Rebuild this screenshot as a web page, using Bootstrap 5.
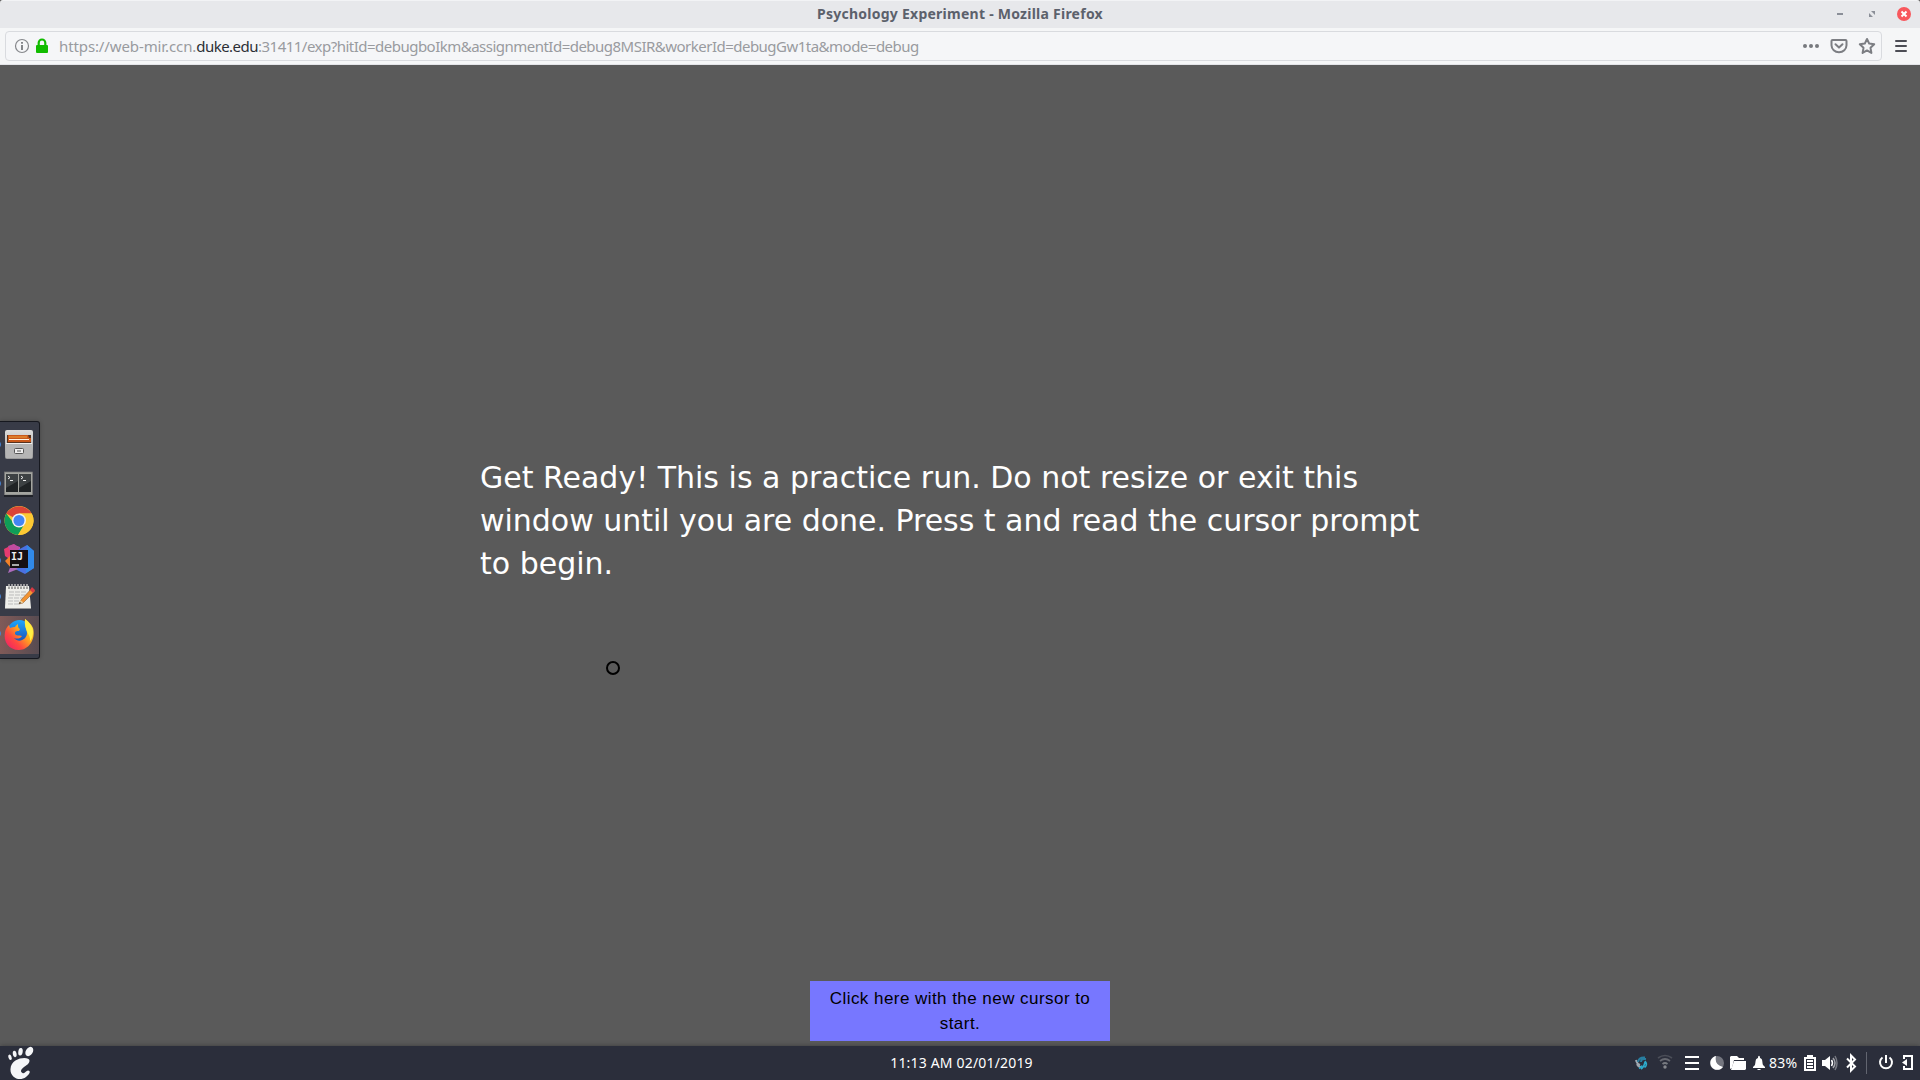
<!DOCTYPE html>
<html lang="en">
<head>
<meta charset="utf-8">
<title>Psychology Experiment</title>
<link href="https://cdn.jsdelivr.net/npm/bootstrap@5.3.0/dist/css/bootstrap.min.css" rel="stylesheet">
<style>
body{height:1080px;overflow:hidden;background:#5a5a5a;font-family:"Noto Sans","Open Sans",sans-serif}
svg{display:block;flex:none}
.titlebar{height:28px;background:#e7e8eb;border-top:1px solid #f2f3f5;color:#5c616c;border-radius:3px 3px 0 0}
.titletext{font-size:14px;font-weight:700;line-height:25px;letter-spacing:.25px}
.winbuttons{right:0;top:0}
.toolbar{height:37px;background:#f5f6f7;padding:3px 0 4px 5px;border-bottom:1px solid #e3e4e8}
.urlbar{width:1877px;height:30px;border:1px solid #d9dbdf;border-radius:4px;background:#f5f6f8}
.url{font-size:15px;line-height:28px;color:#999b9f;white-space:nowrap;padding-left:1px;letter-spacing:-.515px}
.url-host{letter-spacing:-.11px}
.url b{font-weight:400;color:#2c2f35}
.page-area{height:981px;background:#5a5a5a}
.instructions{width:960px;margin:0 auto;padding-top:391px;font:30px/43px "DejaVu Sans",sans-serif;color:#fff;white-space:nowrap}
.line-two{letter-spacing:-.02px}
.ring{left:606px;top:661px;width:14px;height:14px;border:2px solid #000;border-radius:50%}
.startbtn{width:300px;height:60px;margin:0 auto 5px;background:#77f;color:#000;font:17px/25px "Liberation Sans",sans-serif;letter-spacing:.45px;padding:5px 15px;white-space:nowrap;border:0;border-radius:0}
.dock{left:0;top:421px;width:40px;height:238px;background:#383b47;border:1px solid #16181f;border-left:0;border-radius:0 3px 3px 0;padding-top:4px;box-shadow:0 0 4px rgba(0,0,0,.25)}
.active-app{background:linear-gradient(90deg,#805a58,#574b51)}
.taskbar{height:34px;background:#2b2e3b;color:#fff;box-shadow:0 0 5px rgba(0,0,0,.35)}
.clock{font-size:14px;line-height:34px;white-space:nowrap;padding-left:3px;letter-spacing:.18px}
.battery-pct{width:35px;font-size:14px;line-height:34px;white-space:nowrap;letter-spacing:.3px}
.tray{right:0;top:0}
</style>
<script src="https://cdn.jsdelivr.net/npm/bootstrap@5.3.0/dist/js/bootstrap.bundle.min.js"></script>
</head>
<body class="d-flex flex-column">
<header class="titlebar position-relative d-flex justify-content-center">
  <span class="titletext">Psychology Experiment - Mozilla Firefox</span>
  <svg class="winbuttons position-absolute" width="90" height="27" viewBox="0 0 90 27"><path d="M7 13h6" stroke="#8b8f98" stroke-width="2"/><path d="M41 10h4v4zM39 12v4h4z" fill="#8b8f98"/><circle cx="74" cy="13" r="7" fill="#f8585d"/><path d="M71.500 10.500l5 5m0-5l-5 5" stroke="#fff" stroke-width="2"/></svg>
</header>
<nav class="toolbar d-flex">
  <div class="urlbar d-flex align-items-center">
    <svg width="44" height="28" viewBox="0 0 44 28"><circle cx="16" cy="14" r="6.500" fill="none" stroke="#85878b" stroke-width="1.200"/><path d="M16 13v5M16 10v1.800" stroke="#77797d" stroke-width="1.800"/><rect x="30" y="13" width="12" height="8" rx="1" fill="#12bc00"/><path d="M32.700 14v-3.200a3.300 3.300 0 0 1 6.600 0V14" fill="none" stroke="#12bc00" stroke-width="2.200"/></svg>
    <span class="url me-auto ms-2"><span class="url-host">https://web-mir.ccn.</span><b>duke.edu</b>:31411/exp?hitId=debugboIkm&amp;assignmentId=debug8MSIR&amp;workerId=debugGw1ta&amp;mode=debug</span>
    <svg width="81" height="28" viewBox="1 0 81 28"><g fill="#77797e"><circle cx="6" cy="14" r="2"/><circle cx="12" cy="14" r="2"/><circle cx="18" cy="14" r="2"/></g><g fill="none" stroke="#7c7e83" stroke-width="2" stroke-linejoin="round" stroke-linecap="round"><path d="M33.500 8h13q1 0 1 1v4.300a7.500 7 0 0 1-15 0V9q0-1 1-1z"/><path d="M36.500 12.300l3.500 3.300 3.500-3.300"/><path d="M68 7l2.200 4.600 5 .7-3.700 3.500.9 5.100-4.400-2.500-4.400 2.500.9-5.100-3.700-3.500 5-.7z"/></g></svg>
  </div>
  <svg width="38" height="30" viewBox="0 0 38 30"><path d="M14 10h10M14 15h10M14 20h10" stroke="#4c4d55" stroke-width="2" stroke-linecap="round"/></svg>
</nav>
<main class="page-area d-flex flex-column justify-content-between">
  <div class="instructions"><div>Get Ready! This is a practice run. Do not resize or exit this</div><div class="line-two">window until you are done. Press t and read the cursor prompt</div><div>to begin.</div></div>
  <button class="startbtn text-center" type="button">Click here with the new cursor to<br>start.</button>
</main>
<div class="ring position-absolute"></div>
<aside class="dock position-absolute d-flex flex-column">
  <svg width="39" height="39" viewBox="0 0 39 39"><defs><linearGradient id="metal" x2="0" y2="1"><stop stop-color="#ddd"/><stop offset="1" stop-color="#999"/></linearGradient></defs><path d="M0 16a2 3 0 0 1 0 5z" fill="#4685d8"/><rect x="5" y="4" width="28" height="29" rx="2" fill="url(#metal)"/><path d="M7 9h24v8H7z" fill="#553321"/><path d="M8 9h20l1 3h2v4H8z" fill="#c9581a"/><path d="M9 11h18" stroke="#eea03e"/><path d="M9 13.500h20" stroke="#fff3e3"/><path d="M6 17h26v15H6z" fill="#b5b5b5"/><path d="M6 17.500h26" stroke="#eee"/><rect x="14.500" y="22.500" width="9" height="5" rx="1" fill="#eee" stroke="#555"/><path d="M17 25h4" stroke="#555"/></svg>
  <svg width="39" height="41" viewBox="0 -1 39 41"><path d="M0 15a2 3 0 0 1 0 5z" fill="#4685d8"/><rect x="4.500" y="6" width="28" height="23" fill="#a4a5a0" stroke="#777" stroke-width=".7"/><path d="M4 30h29" stroke="#202228" stroke-width="2"/><path d="M6 8h12v18H6zM19 8h12v18H19z" fill="#202325"/><path d="M6 8h12v7L6 22zM19 8h12v7l-12 7z" fill="#3d4143"/><path d="M8 10l2 1.500-2 1.500M10 14.500h3M21 10l2 1.500-2 1.500M23 14.500h3" stroke="#eee" fill="none"/></svg>
  <svg width="39" height="38" viewBox="0 0 39 38"><path d="M0 13a2 3 0 0 1 0 5z" fill="#4685d8"/><circle cx="19" cy="14.500" r="14.500" fill="#fcc934"/><path d="M19 14.500L6.300 7.500A14.700 14.700 0 0 1 31.600 7.500H19z" fill="#db4437"/><path d="M6.300 7.500A14.500 14.500 0 0 0 18 29l6.500-11-11-1z" fill="#0f9d58"/><path d="M19 7.500h12.700A14.500 14.500 0 0 1 18 29l7.200-11z" fill="#fcc934"/><circle cx="19" cy="14.500" r="7" fill="#f1f1f1"/><circle cx="19" cy="14.500" r="5.500" fill="#4285f4"/></svg>
  <svg width="39" height="37" viewBox="0 0 39 37"><path d="M0 14a2 3 0 0 1 0 5z" fill="#4685d8"/><path d="M14 1l6 2v20l-9-1z" fill="#b94fd0"/><path d="M4 5l10-5 4 7-7 9-6-4z" fill="#e63b70"/><path d="M8 2l6-2 6 4-8 8z" fill="#c04c9f"/><path d="M10 12l-5 5 6 7 6-8z" fill="#f38228"/><path d="M18 6l9-5 7 6v17l-9 6-12-6z" fill="#4b70e0"/><path d="M27 1l7 6v17l-8 5z" fill="#3189e8"/><path d="M11 21l-3 8 10-4z" fill="#ad6bbb"/><rect x="10" y="6" width="18" height="18" fill="#161011"/><path d="M12 21h7" stroke="#aaa" stroke-width="2"/><text x="11" y="16" font-family="DejaVu Sans Mono, monospace" font-weight="bold" font-size="10" fill="#eee">IJ</text></svg>
  <svg width="39" height="35" viewBox="0 0 39 35"><path d="M0 13a2 3 0 0 1 0 5z" fill="#4685d8"/><path d="M6 5h23l2 22H5z" fill="#eeeeea"/><path d="M5 27h26v1H5z" fill="#999"/><path d="M9 3v5M12 3v5M15 3v5M18 3v5M21 3v5M24 3v5M27 3v5" stroke="#555"/><path d="M9 3v3M12 3v3M15 3v3M18 3v3M21 3v3M24 3v3M27 3v3" stroke="#eee"/><path d="M9 11h18M9 14h16M8 17h15M8 20h13M8 23h11" stroke="#bbb" stroke-dasharray="5 1"/><path d="M19 23l2-4L32 7l3 3-12 12z" fill="#f29332" stroke="#7c502e" stroke-width=".5"/><path d="M30 9l2-3 3 3-2 3z" fill="#d83943"/><path d="M19 23l1.500-4 3 2.500z" fill="#e9cf9f"/><path d="M19 23l.7-2 1.500 1z" fill="#222"/></svg>
  <svg class="active-app" width="39" height="38" viewBox="0 0 39 38"><defs><linearGradient id="fox" x1="1" x2="0" y2="1"><stop stop-color="#fff044"/><stop offset=".4" stop-color="#ffad1f"/><stop offset=".67" stop-color="#ff4a3f"/><stop offset="1" stop-color="#ed1572"/></linearGradient><linearGradient id="globe" y2="1" x2="0"><stop stop-color="#1ca7ff"/><stop offset="1" stop-color="#2148ae"/></linearGradient></defs><path d="M0 15a2 3 0 0 1 0 5z" fill="#4685d8"/><circle cx="19.500" cy="16" r="12" fill="url(#globe)"/><path d="M25 3c4 3 6 5 8 9 3 11-4 22-14 22C9 34 3 26 5 16c.5-3 2-5 4-7l1 3c2-1 4-1 5-1 1-2 2-2 3-3 0 3 0 4 2 5l-1 2c-4 0-4 1-4 3 1 2 4 1 7 2-2 3-5 3-8 2 5 6 13 1 13-5 0-4-3-6-2-14z" fill="url(#fox)"/><path d="M25 3c4 3 7 7 8 12 0 4-1 8-3 10 1-6-6-9-5-22z" fill="#fff044"/></svg>
</aside>
<footer class="taskbar position-relative d-flex justify-content-between">
  <svg width="40" height="34" viewBox="0 0 40 34"><g fill="#f5f6f8"><ellipse cx="29.300" cy="5.500" rx="3.500" ry="5" transform="rotate(32 29.300 5.500)"/><ellipse cx="20.500" cy="5.800" rx="2.200" ry="3.800" transform="rotate(8 20.500 5.800)"/><ellipse cx="14.700" cy="8" rx="1.900" ry="3.200" transform="rotate(-8 14.700 8)"/><ellipse cx="10" cy="11.300" rx="1.600" ry="2.800" transform="rotate(-20 10 11.300)"/><path d="M29.500 14.500c0-4.500-18.500-3.500-19 8.500C10 31 19 36 26 31c4-3 5-6 2-6.500-2 0-3 3.500-5.500 2.500-3-1.500-1-4 1.500-6 3-2 5.500-3.500 5.500-6.500z"/></g></svg>
  <span class="clock position-absolute start-50 translate-middle-x">11:13 AM 02/01/2019</span>
  <div class="tray position-absolute d-flex">
    <svg width="23" height="34" viewBox="0 0 23 34"><g fill="none" stroke-width="2"><path d="M2 14q1 4 4 5M3 18q1 3 4 3" stroke="#a0a8b0"/><path d="M11 11.500q-6-.5-7 4.500M12 13q-5-.5-5 3" stroke="#287ea0"/><path d="M11 15q3 4-.5 6.500M8 19.500q-1 2-3 3M11 16q-1 5-4 7" stroke="#2daacb" stroke-width="1.600"/></g></svg>
    <svg width="28" height="34" viewBox="0 0 28 34"><g fill="none" stroke="#4b4e58" stroke-width="1.700"><path d="M1 12q7-5 14 0"/><path d="M3 15q5-4 10 0" stroke="#666870"/><path d="M5.500 18q2.500-2 5 0" stroke="#777a80"/></g><circle cx="8" cy="21" r="1.700" fill="#85878d"/></svg>
    <svg width="25" height="34" viewBox="0 0 25 34"><path d="M0 11h14M0 17h14M0 23h14" stroke="#fff" stroke-width="2"/></svg>
    <svg width="20" height="34" viewBox="0 0 20 34"><circle cx="7" cy="17" r="7" fill="#74767f"/><path d="M6 10a7 7 0 1 0 7 11Q4 19 6 10z" fill="#fff"/></svg>
    <svg width="23" height="34" viewBox="0 0 23 34"><path d="M0 23V11l1-1h6l2 2h5v2H4l-2 8z" fill="#fff"/><path d="M4 15h12v8l-1 1H1z" fill="#fff"/></svg>
    <svg width="16" height="34" viewBox="0 0 16 34"><path d="M0 22v-1l2-2c1-4 0-6 3-7 0-3 2-3 2 0 3 1 2 4 3 7l2 2v1zM4 23h4l-1 1H5z" fill="#fff"/></svg>
    <span class="battery-pct">83%</span>
    <svg width="18" height="34" viewBox="0 0 18 34"><path d="M0 11h3V9h6v2h3v14H0z" fill="#fff"/><path d="M2 13h8v10H2z" fill="#2b2e3b"/><path d="M3 15h6M3 18h6M3 21h6" stroke="#fff" stroke-width="2"/></svg>
    <svg width="24" height="34" viewBox="0 0 24 34"><path d="M0 14h3l5-4v14l-5-4H0z" fill="#fff"/><g fill="none" stroke-width="1.500"><path d="M9.500 14q2 3 0 6" stroke="#fff"/><path d="M11 12q4 5 0 10" stroke="#a2a3a9"/><path d="M13 10q4 7 0 14" stroke="#777982"/></g></svg>
    <svg width="20" height="34" viewBox="0 0 20 34"><path d="M1 12.500l8 8-4 4V9.500l4 4-8 8" stroke="#fff" stroke-width="2" fill="none"/></svg>
    <svg width="12" height="34" viewBox="0 0 12 34"><path d="M.5 6v22" stroke="#626570"/></svg>
    <svg width="24" height="34" viewBox="0 0 24 34"><path d="M8 9v8M4.500 11.500a6 6 0 1 0 7 0" fill="none" stroke="#fff" stroke-width="2"/></svg>
    <svg width="18" height="34" viewBox="0 0 18 34"><path d="M2 13v-3h8v13H2v-3" fill="none" stroke="#fff" stroke-width="2"/><path d="M0 16.500l5-3.500v7z" fill="#fff"/></svg>
  </div>
</footer>
</body>
</html>
